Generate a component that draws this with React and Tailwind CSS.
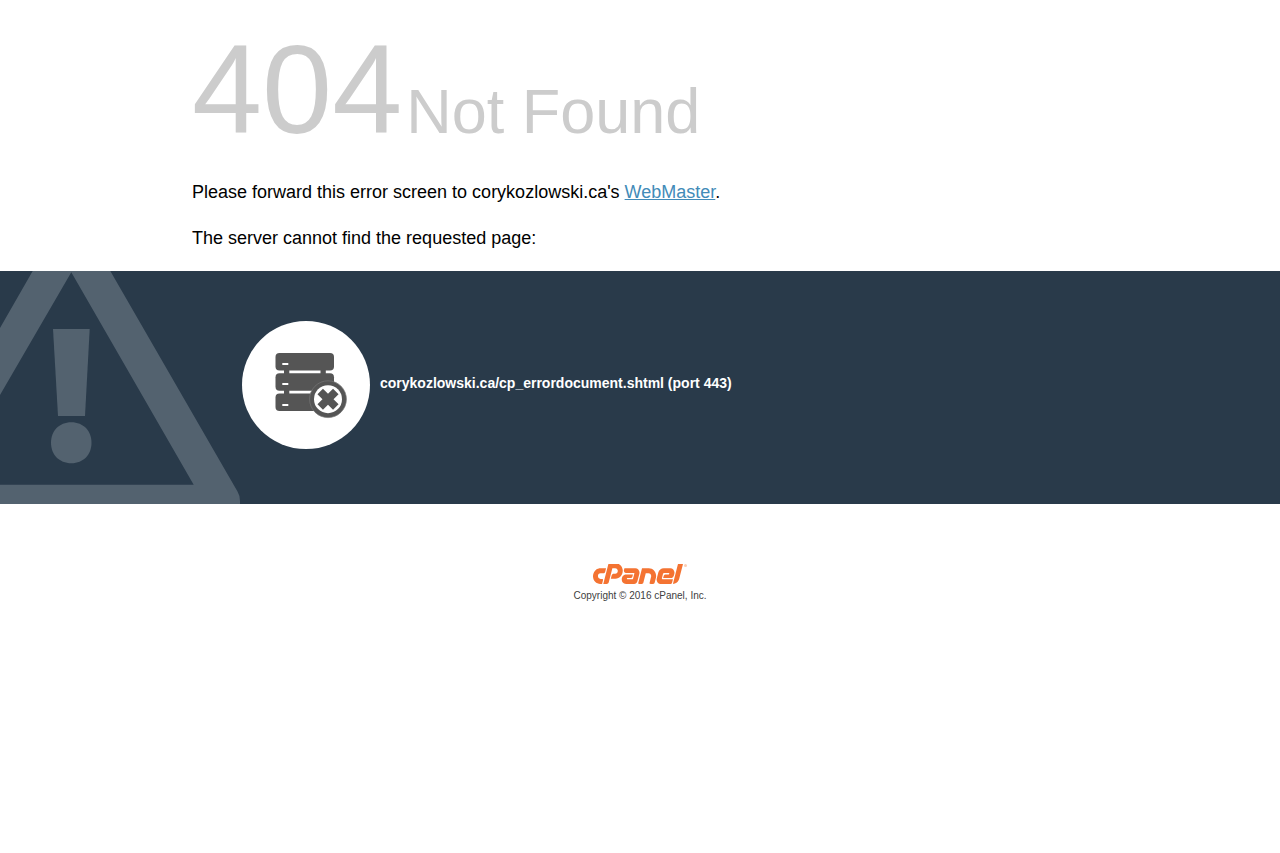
import { FaCpanel } from 'react-icons/fa'

const rackUnits = [32, 52.3, 72.5]

function WarningSign() {
  return (
    <svg className="absolute bottom-0 left-0" width="240" height="233" viewBox="0 0 240 233" fill="#53626f" aria-hidden="true">
      <path
        fillRule="evenodd"
        d="M0 57L32.7 0H110.3L237.5 220.5Q240 224.5 240 230V233H0V213.7H193.7L71.3 1.3L0 124Z"
      />
      <path d="M53 58H89.7L85 145H58Z" />
      <path d="M71.3 151.2C83.5 151.2 91.5 160 91.5 171.7S83.5 192.2 71.3 192.2S51 183.4 51 171.7S59.1 151.2 71.3 151.2Z" />
    </svg>
  )
}

function ServerIcon() {
  return (
    <svg width="128" height="128" viewBox="0 0 128 128" fill="#555" aria-hidden="true">
      {/* Rack */}
      <rect x="42" y="46" width="5.3" height="30" />
      <rect x="78.5" y="46" width="5.3" height="30" />
      {rackUnits.map((y) => (
        <g key={y}>
          <rect x="33.5" y={y} width="58.5" height="17.4" rx="4" />
          <rect x="40.3" y={Math.round(y) + 10} width="6" height="2" fill="#fff" />
        </g>
      ))}

      {/* Error badge */}
      <circle cx="86" cy="78.2" r="18.4" stroke="#777" strokeWidth="0.7" />
      <circle cx="86" cy="78.2" r="14" fill="#fff" />
      <path d="M78.2 70.4L93.8 86M93.8 70.4L78.2 86" stroke="#555" strokeWidth="7.8" />
    </svg>
  )
}

export default function App() {
  return (
    <div className="bg-white font-['Liberation_Sans',Arial,sans-serif] text-lg leading-[23px] text-black">
      <header className="mx-auto w-[70%] pt-[18px]">
        <h1 className="flex flex-wrap items-baseline gap-1 text-[#ccc]">
          <span className="text-[126px] leading-[144px]">404</span>
          <span className="text-[63px] leading-[72px]">Not Found</span>
        </h1>
        <p className="mt-[19px]">
          Please forward this error screen to corykozlowski.ca's{' '}
          <a href="#webmaster" className="text-[#428bb8] underline">WebMaster</a>.
        </p>
        <p className="mt-[23px] pb-[21px]">The server cannot find the requested page:</p>
      </header>

      <section className="relative bg-[#293a4a]">
        <WarningSign />
        <div className="relative mx-auto flex w-[70%] gap-[10px] px-[50px] pt-[50px] pb-[55px]">
          <div className="size-32 shrink-0 rounded-full bg-white">
            <ServerIcon />
          </div>
          <p className="mt-[52px] text-sm leading-5 font-bold text-white">
            corykozlowski.ca/cp_errordocument.shtml (port 443)
          </p>
        </div>
      </section>

      <footer className="mt-[60px] flex flex-col items-center text-[10px] leading-3 text-[#404040]">
        <a href="#cpanel" aria-label="cPanel, Inc." className="relative block pr-1">
          <FaCpanel viewBox="0 185 640 142" preserveAspectRatio="none" className="h-[21px] w-[90px] text-[#f47332]" />
          <span className="absolute top-0 right-0 size-[3px] rounded-full bg-[#fbcdb4]" />
        </a>
        <p className="mt-[5px]">Copyright © 2016 cPanel, Inc.</p>
      </footer>
    </div>
  )
}
